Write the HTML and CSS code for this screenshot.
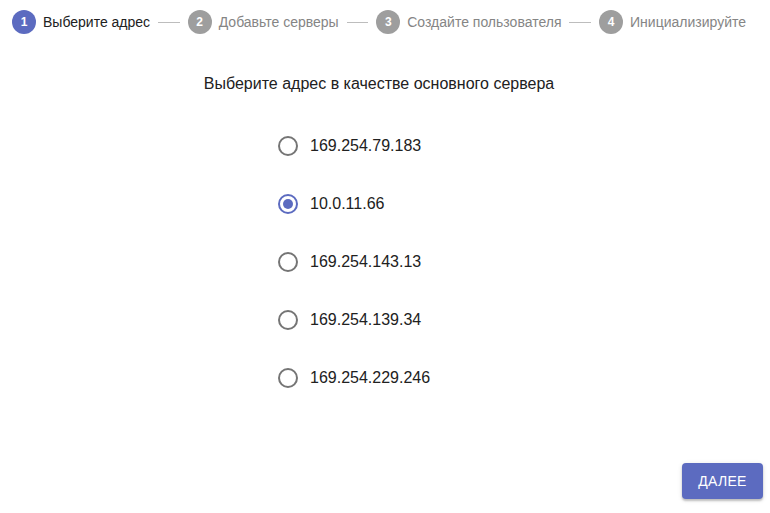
FILE: index.html
```html
<!DOCTYPE html>
<html lang="ru">
<head>
<meta charset="utf-8">
<link rel="stylesheet" href="styles.css">
</head>
<body>
<div class="page">
  <div class="stepper">
    <div class="step active"><span class="num">1</span><span class="label">Выберите адрес</span></div>
    <div class="conn"></div>
    <div class="step"><span class="num">2</span><span class="label">Добавьте серверы</span></div>
    <div class="conn"></div>
    <div class="step"><span class="num">3</span><span class="label">Создайте пользователя</span></div>
    <div class="conn"></div>
    <div class="step"><span class="num">4</span><span class="label">Инициализируйте</span></div>
  </div>
  <div class="content">
    <div class="title">Выберите адрес в качестве основного сервера</div>
    <div class="radios">
      <label class="radio"><span class="circle"></span><span class="rlabel">169.254.79.183</span></label>
      <label class="radio checked"><span class="circle"><span class="dot"></span></span><span class="rlabel">10.0.11.66</span></label>
      <label class="radio"><span class="circle"></span><span class="rlabel">169.254.143.13</span></label>
      <label class="radio"><span class="circle"></span><span class="rlabel">169.254.139.34</span></label>
      <label class="radio"><span class="circle"></span><span class="rlabel">169.254.229.246</span></label>
    </div>
  </div>
  <div class="footer">
    <button class="btn">ДАЛЕЕ</button>
  </div>
</div>
</body>
</html>
```
FILE: styles.css
```css
html, body {
  margin: 0;
  padding: 0;
  background: #ffffff;
  font-family: "Liberation Sans", Arial, sans-serif;
}
.page {
  width: 770px;
  height: 513px;
  display: flex;
  flex-direction: column;
}
.stepper {
  display: flex;
  align-items: center;
  padding: 10px 24px 0 12px;
  height: 24px;
}
.step {
  display: flex;
  align-items: center;
}
.num {
  width: 24px;
  height: 24px;
  border-radius: 50%;
  background: #9e9e9e;
  color: #fff;
  font-size: 12px;
  font-weight: bold;
  display: flex;
  align-items: center;
  justify-content: center;
}
.step.active .num {
  background: #5c6bc0;
}
.label {
  margin-left: 7px;
  font-size: 14px;
  color: #858585;
}
.step.active .label {
  color: #212121;
}
.conn {
  flex: 1;
  height: 1px;
  background: #bdbdbd;
  margin: 0 8px;
}
.content {
  display: flex;
  flex-direction: column;
  align-items: center;
  padding-right: 12px;
}
.title {
  margin-top: 41px;
  font-size: 16px;
  color: #212121;
  height: 18px;
  line-height: 18px;
}
.radios {
  margin-top: 43px;
  display: flex;
  flex-direction: column;
  gap: 38px;
  align-self: flex-start;
  margin-left: 278px;
}
.radio {
  display: flex;
  align-items: center;
  height: 20px;
}
.circle {
  width: 16px;
  height: 16px;
  border: 2px solid #757575;
  border-radius: 50%;
  display: flex;
  align-items: center;
  justify-content: center;
}
.radio.checked .circle {
  border-color: #5c6bc0;
}
.dot {
  width: 10px;
  height: 10px;
  border-radius: 50%;
  background: #5c6bc0;
}
.rlabel {
  margin-left: 12px;
  font-size: 16px;
  color: #212121;
}
.footer {
  margin-top: auto;
  display: flex;
  justify-content: flex-end;
  padding: 0 7px 14px 0;
}
.btn {
  width: 81px;
  height: 36px;
  border: none;
  border-radius: 4px;
  background: #5c6bc0;
  color: #fff;
  font-family: "Liberation Sans", Arial, sans-serif;
  font-size: 14px;
  font-weight: 500;
  letter-spacing: 0.3px;
  box-shadow: 0 2px 2px rgba(0,0,0,0.2), 0 1px 5px rgba(0,0,0,0.12);
}
```
